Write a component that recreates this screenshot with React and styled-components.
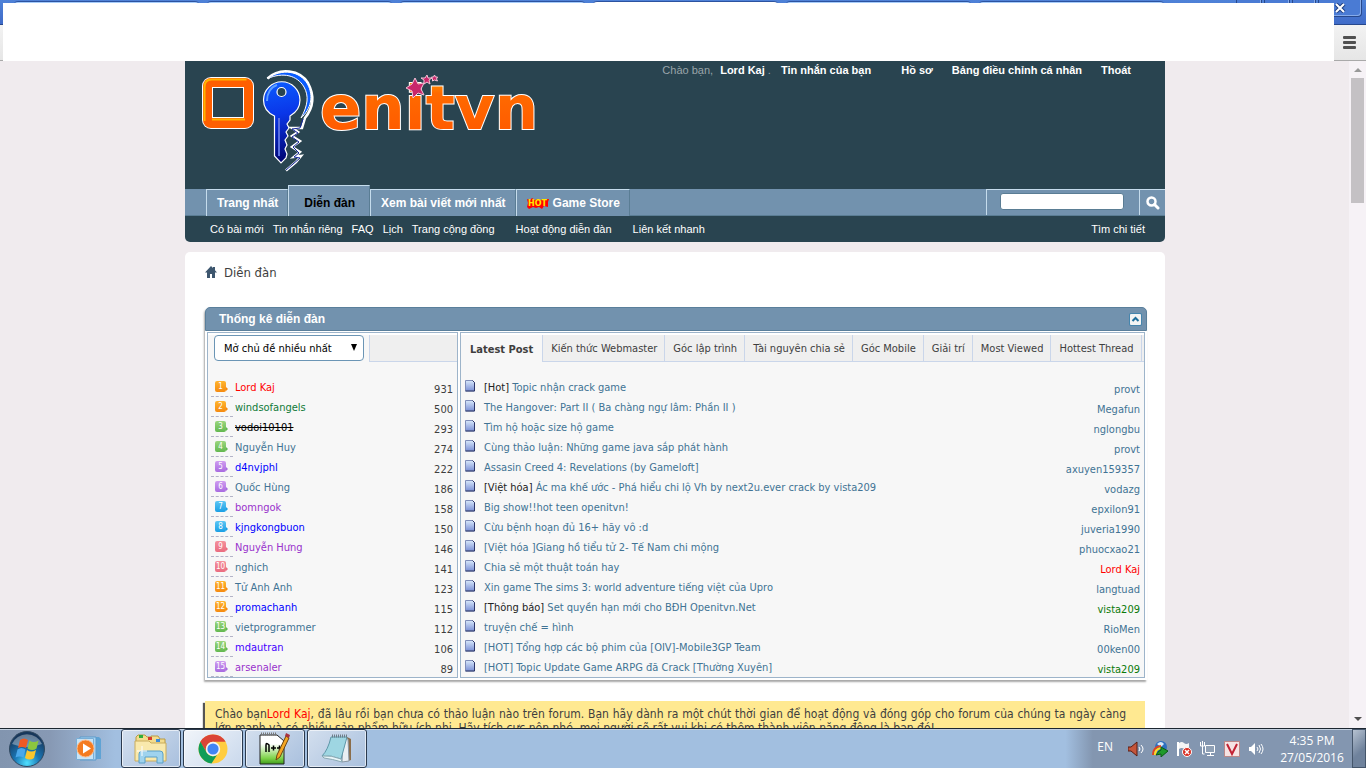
import React from 'react';
import styled, { createGlobalStyle } from 'styled-components';

const tahoma = "'DejaVu Sans Condensed', 'DejaVu Sans', sans-serif";
const arial = "'Liberation Sans', Arial, sans-serif";
const segoe = "'Open Sans', 'Noto Sans', sans-serif";

const GlobalStyle = createGlobalStyle`
  * {
    box-sizing: border-box;
  }
  body {
    margin: 0;
    background: #f0ebee;
  }
  a {
    color: inherit;
    text-decoration: none;
  }
  button, input, select {
    margin: 0;
    font: inherit;
    color: inherit;
  }
  table {
    border-collapse: collapse;
    width: 100%;
  }
  td {
    padding: 0;
  }
`;

const Screen = styled.div`
  display: flex;
  flex-direction: column;
  height: 100vh;
  overflow: hidden;
`;

/* browser window frame */

const Browser = styled.header`
  position: relative;
  flex: none;
  height: 61px;
  background: linear-gradient(#fbfbfb, #e6e6e6);
  border-bottom: 1px solid #a9a9a9;
`;

const TitleBar = styled.div`
  display: flex;
  justify-content: space-between;
  height: 25px;
  background: linear-gradient(#4f82d8, #3f6bc8);
  border-bottom: 1px solid #27488c;
`;

const BrowserTabs = styled.div`
  display: flex;
  gap: 8px;
  padding: 1px 0 0 14px;
`;

const BrowserTab = styled.span`
  width: 185px;
  height: 20px;
  border-top: 1px solid #2c53a0;
  border-radius: 4px 4px 0 0;
  background: ${(p) => (p.$active ? '#fff' : '#a6ccfb')};
`;

const CaptionButtons = styled.div`
  display: flex;
  gap: 2px;
  padding-right: 4px;
`;

const CaptionButton = styled.button`
  display: flex;
  align-items: center;
  justify-content: center;
  width: ${(p) => p.$width}px;
  height: 17px;
  padding: 0;
  border: 1px solid #27488c;
  border-top: 0;
  border-radius: 0 0 4px 4px;
  background: #4a7bd4;
  box-shadow: inset -1px -1px 0 #86abea;
`;

const MenuButton = styled.button`
  position: absolute;
  right: 10px;
  top: 36px;
  display: flex;
  flex-direction: column;
  gap: 2px;
  padding: 0;
  border: 0;
  background: none;

  span {
    width: 13px;
    height: 3px;
    border-radius: 1px;
    background: #505050;
  }
`;

const Cover = styled.div`
  position: absolute;
  top: 3px;
  right: 32px;
  bottom: -1px;
  left: 3px;
  background: #fff;
`;

/* scrolled page */

const Viewport = styled.div`
  display: flex;
  flex: 1;
  min-height: 0;
`;

const Page = styled.div`
  flex: 1;
  min-width: 0;
  overflow: hidden;
  padding-left: 1px;
`;

const Wrap = styled.div`
  max-width: 980px;
  margin: 0 auto;
`;

const ScrollBar = styled.div`
  display: flex;
  flex-direction: column;
  align-items: center;
  width: 17px;
  padding: 7px 0;
  background: #f6f2f6;
`;

const Thumb = styled.div`
  width: 13px;
  height: 125px;
  margin: 6px 0 auto;
  background: #c4c1c4;
`;

const Arrow = styled.span`
  border: 4px solid transparent;
  ${(p) => (p.$up ? 'border-bottom-color: #999; border-top: 0;' : 'border-top-color: #505050; border-bottom: 0;')}
`;

const Header = styled.div`
  background: #294450;
  border-radius: 0 0 5px 5px;
  font-family: ${arial};
  font-size: 11px;
  color: #fff;
`;

const HeaderTop = styled.div`
  display: flex;
  justify-content: space-between;
  align-items: flex-start;
  height: 128px;
  padding: 3px 34px 0 15px;
`;

const Logo = styled.a`
  margin-top: 2px;

  svg {
    display: block;
  }
`;

const UserLinks = styled.ul`
  display: flex;
  gap: 18px;
  margin: 0;
  padding: 0;
  list-style: none;
  font-weight: bold;
  line-height: 13px;

  li:nth-child(2) {
    margin-right: 12px;
  }
  li:nth-child(3), li:nth-child(4) {
    margin-right: 1px;
  }
`;

const Welcome = styled.li`
  margin-right: -8px;
  font-weight: normal;
  color: #9aa4aa;

  a {
    margin-left: 4px;
    font-weight: bold;
    color: #fff;
  }
`;

const NavBar = styled.nav`
  display: flex;
  height: 27px;
  padding-left: 21px;
  background: #7292ae;
  border-bottom: 1px solid #5a7d94;
  font-size: 12px;
  font-weight: bold;
`;

const NavTab = styled.a`
  display: flex;
  align-items: center;
  gap: 4px;
  height: ${(p) => (p.$active ? 31 : 27)}px;
  margin-top: ${(p) => (p.$active ? -4 : 0)}px;
  padding: ${(p) => (p.$active ? '4px 14px 0 15px' : '0 9px 0 10px')};
  background: #7292ae;
  border: solid #c5dcec;
  border-width: 1px 0 0 1px;
  border-right: 1px solid #5a7d94;
  color: ${(p) => (p.$active ? '#000' : '#fff')};
`;

const SearchForm = styled.form`
  display: flex;
  margin-left: auto;
`;

const SearchCell = styled.div`
  display: flex;
  align-items: center;
  padding: 0 15px 2px 13px;
  border: solid #c5dcec;
  border-width: 1px 0 0 1px;
`;

const SearchInput = styled.input`
  width: 124px;
  height: 17px;
  padding: 0 4px;
  border: 1px solid #5a7d94;
  border-radius: 3px;
  background: #fff;
  color: #333;
`;

const SearchButton = styled.button`
  width: 26px;
  padding: 0;
  border: solid #c5dcec;
  border-width: 1px 0 0 1px;
  background: none;

  svg {
    display: block;
    margin: 0 auto;
  }
`;

const SubNav = styled.nav`
  display: flex;
  height: 26px;
  padding: 1px 20px 0 25px;
  line-height: 25px;

  a {
    margin-right: 9px;
  }
  a:nth-child(5), a:nth-child(6) {
    margin-right: 21px;
  }
  a:last-child {
    margin: 0 0 0 auto;
  }
`;

const Content = styled.main`
  margin-top: 10px;
  padding: 10px 18px 20px 20px;
  background: #fff;
  border-radius: 5px 5px 0 0;
  font-family: ${tahoma};
  color: #3e3e3e;
`;

const Breadcrumb = styled.nav`
  display: flex;
  align-items: center;
  gap: 7px;
  height: 20px;
  margin-bottom: 25px;
  font-size: 13px;
`;

const Panel = styled.section`
  border-radius: 5px 5px 0 0;
  box-shadow: -1px 2px 2px rgba(0, 0, 0, 0.35);
`;

const PanelTitle = styled.div`
  display: flex;
  align-items: center;
  justify-content: space-between;
  height: 24px;
  padding: 0 5px 0 13px;
  background: #7292ae;
  border: 1px solid #5a7f9b;
  border-radius: 5px 5px 0 0;
  font-family: ${arial};
  color: #fff;

  h2 {
    margin: 0;
    font-size: 12px;
  }
`;

const Collapse = styled.button`
  width: 11px;
  height: 11px;
  padding: 0;
  border: 0;
  border-radius: 1px;
  background: #f4f4f4;
  box-shadow: 0 0 0 1px #4585ad;

  svg {
    display: block;
  }
`;

const PanelBody = styled.div`
  display: flex;
  gap: 2px;
  padding: 1px 2px 2px;
  background: #fff;
  font-size: 11px;
`;

const Box = styled.div`
  flex: ${(p) => (p.$side ? '0 0 251px' : 1)};
  min-width: 0;
  padding-top: 2px;
  border: 1px solid #9db4ca;
  background: #f7f7f7;
  box-shadow: inset 0 2px 0 #fff;
`;

const BoxHead = styled.div`
  display: flex;
  height: 27px;
  margin-bottom: 15px;
`;

const TopSelect = styled.select`
  width: 150px;
  height: 26px;
  margin: 0 5px 0 6px;
  padding: 0 9px;
  border: 1px solid #6b95b5;
  border-radius: 4px;
  background: #fff;
  color: #000;
  appearance: none;
`;

const SelectWrap = styled.label`
  position: relative;

  &::after {
    content: '';
    position: absolute;
    right: 12px;
    top: 9px;
    border: 3px solid transparent;
    border-top: 7px solid #000;
    border-bottom: 0;
  }
`;

const HeadFill = styled.div`
  flex: 1;
  background: #efefef;
  border: solid #cad6ea;
  border-width: 0 0 1px 1px;
`;

const Tab = styled.button`
  padding: 1px 7px 0 8px;
  border: solid #cad6ea;
  border-width: 0 0 1px 1px;
  background: #efefef;
  white-space: nowrap;

  ${(p) => p.$active && `
    padding: 1px 9px 0;
    border-width: 0;
    background: #f7f7f7;
    font-weight: bold;
  `}
`;

const Row = styled.tr`
  height: 20px;
`;

const RankCell = styled.td`
  width: 27px;
  padding-left: 3px;
`;

const RankSlot = styled.div`
  width: 22px;
  height: 20px;
  padding: 4px 0 0 4px;
  border-bottom: 1px dashed #b3b3c8;
`;

const rankColors = {
  orange: ['#ffb52e', '#f58a10'],
  green: ['#9bd67e', '#63b850'],
  purple: ['#cf9cf0', '#a86be0'],
  blue: ['#5cc6f4', '#1a9fe4'],
  pink: ['#f4929c', '#ea6c80'],
};

const Rank = styled.span`
  position: relative;
  display: block;
  width: 11px;
  height: 11px;
  border-radius: 2px;
  background: linear-gradient(${(p) => rankColors[p.$tone].join(', ')});
  font-size: 8px;
  line-height: 11px;
  text-align: center;
  color: #fff;

  &::after {
    content: '';
    position: absolute;
    left: 11px;
    bottom: 1px;
    border: 2px solid transparent;
    border-left-color: ${(p) => rankColors[p.$tone][1]};
    border-right: 0;
  }
`;

const Name = styled.a`
  color: ${(p) => p.$color || '#417394'};
  text-decoration: ${(p) => (p.$struck ? 'line-through' : 'none')};
`;

const Number = styled.td`
  padding: 4px 4px 0 0;
  text-align: right;
`;

const IconCell = styled.td`
  width: 23px;
  padding-left: 4px;

  svg {
    display: block;
    margin-top: -3px;
  }
`;

const Prefix = styled.span`
  color: #222;
`;

const Notice = styled.p`
  margin: 21px 2px 0 0;
  padding: 6px 19px 10px 10px;
  background: #ffe991;
  box-shadow: -2px 2px 1px #555;
  font-size: 12px;
  line-height: 14px;
  text-align: justify;
`;

/* taskbar */

const TaskBar = styled.footer`
  display: flex;
  flex: none;
  height: 40px;
  border-top: 1px solid #1c2630;
  background: linear-gradient(90deg, #8295af 0, #8799b4 50px, #a2bfe0 115px, #a2bfe0 78%, #8396b0 80%);
  box-shadow: inset 0 1px 0 #c3d0df;
  font-family: ${segoe};
  font-size: 12px;
  color: #fff;
`;

const StartButton = styled.button`
  margin-left: 8px;
  padding: 0;
  border: 0;
  background: none;

  svg {
    display: block;
  }
`;

const Pinned = styled.button`
  margin: 0 20px 0 30px;
  padding: 0;
  border: 0;
  background: none;

  svg {
    display: block;
  }
`;

const TaskButtons = styled.div`
  display: flex;
  gap: 2px;
`;

const TaskButton = styled.button`
  display: flex;
  align-items: center;
  justify-content: center;
  width: 60px;
  padding: 0;
  border: 1px solid #2b3a4e;
  border-radius: 3px;
  background: linear-gradient(135deg, ${(p) => (p.$active ? '#f1f5fa, #c9d8ec' : '#d3dfee, #a9c0de')});
  box-shadow: inset 0 0 0 1px rgba(255, 255, 255, 0.6);
`;

const Tray = styled.div`
  display: flex;
  align-items: center;
  margin-left: auto;
`;

const TrayGroup = styled.div`
  display: flex;
  align-items: center;
  gap: 8px;
  margin-right: 8px;
`;

const Lang = styled.span`
  margin: 0 7px 4px 0;
  line-height: 16px;
`;

const Clock = styled.time`
  width: 80px;
  line-height: 17px;
  text-align: center;
`;

const ShowDesktop = styled.button`
  width: 14px;
  height: 39px;
  padding: 0;
  border: 1px solid #45566b;
  background: linear-gradient(135deg, #b6c2d1, #6f829c 60%);
`;

const browserTabs = [0, 1, 2, 3, 4, 5];

const members = [
  ['Lord Kaj', 931, 'orange', '#ff0000'],
  ['windsofangels', 500, 'orange', '#107a38'],
  ['vodoi10101', 293, 'green', '#000000'],
  ['Nguyễn Huy', 274, 'green'],
  ['d4nvjphl', 222, 'purple', '#0000ff'],
  ['Quốc Hùng', 186, 'purple'],
  ['bomngok', 158, 'blue', '#9932cc'],
  ['kjngkongbuon', 150, 'blue', '#0000ff'],
  ['Nguyễn Hưng', 146, 'pink', '#9932cc'],
  ['nghich', 141, 'pink'],
  ['Tử Anh Anh', 123, 'orange'],
  ['promachanh', 115, 'orange', '#0000ff'],
  ['vietprogrammer', 112, 'green'],
  ['mdautran', 106, 'green', '#4400ff'],
  ['arsenaler', 89, 'purple', '#9932cc'],
];

const tabs = [
  'Latest Post',
  'Kiến thức Webmaster',
  'Góc lập trình',
  'Tài nguyên chia sẻ',
  'Góc Mobile',
  'Giải trí',
  'Most Viewed',
  'Hottest Thread',
];

const posts = [
  ['[Hot]', 'Topic nhận crack game', 'provt'],
  ['', 'The Hangover: Part II ( Ba chàng ngự lâm: Phần II )', 'Megafun'],
  ['', 'Tìm hộ hoặc size hộ game', 'nglongbu'],
  ['', 'Cùng thảo luận: Những game java sắp phát hành', 'provt'],
  ['', 'Assasin Creed 4: Revelations (by Gameloft]', 'axuyen159357'],
  ['[Việt hóa]', 'Ác ma khế ước - Phá hiểu chi lộ Vh by next2u.ever crack by vista209', 'vodazg'],
  ['', 'Big show!!hot teen openitvn!', 'epxilon91'],
  ['', 'Cừu bệnh hoạn đủ 16+ hãy vô :d', 'juveria1990'],
  ['', '[Việt hóa ]Giang hồ tiểu tử 2- Tế Nam chi mộng', 'phuocxao21'],
  ['', 'Chia sẻ một thuật toán hay', 'Lord Kaj', '#ff0000'],
  ['', 'Xin game The sims 3: world adventure tiếng việt của Upro', 'langtuad'],
  ['[Thông báo]', 'Set quyền hạn mới cho BĐH Openitvn.Net', 'vista209', '#0a7a0a'],
  ['', 'truyện chế = hình', 'RioMen'],
  ['', '[HOT] Tổng hợp các bộ phim của [OIV]-Mobile3GP Team', '00ken00'],
  ['', '[HOT] Topic Update Game ARPG đã Crack [Thường Xuyên]', 'vista209', '#0a7a0a'],
];

const LogoArt = () => (
  <svg width="340" height="108" viewBox="200 66 340 108" role="img" aria-label="Openitvn">
    <defs>
      <linearGradient id="orange" x1="0" y1="0" x2="0" y2="1">
        <stop offset="0" stopColor="#ffae00" />
        <stop offset="0.3" stopColor="#ff6a00" />
        <stop offset="0.8" stopColor="#ff5c00" />
        <stop offset="1" stopColor="#ff7a00" />
      </linearGradient>
      <linearGradient id="blue" gradientUnits="userSpaceOnUse" x1="275" y1="80" x2="290" y2="165">
        <stop offset="0" stopColor="#0c5cff" />
        <stop offset="0.4" stopColor="#0a36e8" />
        <stop offset="1" stopColor="#000066" />
      </linearGradient>
    </defs>
    <rect x="202" y="77" width="52" height="52" rx="9" fill="#fff" />
    <rect x="203" y="78" width="50" height="50" rx="8" fill="#ff5f00" />
    <path d="M204.500 121V87q0-7.500 7-7.500h35" fill="none" stroke="#ffb400" strokeWidth="2" />
    <path d="M212 119.500h33" stroke="#ffb400" strokeWidth="2" />
    <rect x="212" y="87" width="32" height="31" fill="#fff" />
    <rect x="213" y="88" width="30" height="29" fill="#294450" />
    <path
      d="M267.500 78.500C280 67 300 70 308 83C315 96 313 108 305 118L302 128L292 128L298 132L292 136L300 141L292 147L300 152L294 157L301 156L296 162L286 170.500"
      fill="none"
      stroke="#fff"
      strokeWidth="2.500"
    />
    <path
      d="M267.500 78.500C282 68 300 71 307.500 84C314 96 311 109 301 118C308 105 309 96 304 87C297 75 283 72 267.500 78.500Z"
      fill="#0a5cff"
      stroke="#fff"
      strokeWidth="1"
    />
    <path
      d="M303 119L300 128L292 129L298 133L292 137L299 142L293 147L299 153L294 157L300 158L286 170"
      fill="none"
      stroke="#14259a"
      strokeWidth="1"
    />
    <path
      fillRule="evenodd"
      d="M274.500 116C268 113 263.500 107 263.500 100A18.200 18.200 0 0 1 300 100C300 107 297 112 290 116V120L287 124L289 128L286 132L288 136L285 140L287 145L285 149L287 154L286 158L281 163L274.500 156ZM281.500 87.500A4.500 4.500 0 1 0 281.500 96.500A4.500 4.500 0 1 0 281.500 87.500Z"
      fill="url(#blue)"
      stroke="#fff"
      strokeWidth="1.200"
    />
    <path d="M267 101c0-8 4-14 10-16" fill="none" stroke="#5fa0ff" strokeWidth="2" />
    <path d="M279 118v38" stroke="#5a6fe0" strokeWidth="2" />
    <text
      x="320"
      y="129"
      fontFamily="'DejaVu Sans', sans-serif"
      fontSize="61"
      fontWeight="bold"
      fill="url(#orange)"
      stroke="#fff"
      strokeWidth="2"
      paintOrder="stroke"
    >
      enitvn
    </text>
    <g fill="#c9276b" stroke="#f4c4d8" strokeWidth="1">
      <path d="M415 78l3 6 6-1-3 6 3 6-6-2-5 5-1-7-6-3 6-4z" />
      <path d="M427 75l1 3 4 0-3 2 1 4-3-2-3 2 0-4-3-2 4 0z" />
      <path d="M434.500 75l1 2 2 0-1 2 1 2-3-1-2 1 0-2-1-2 2 0z" />
    </g>
  </svg>
);

const HotIcon = () => (
  <svg width="22" height="11" viewBox="0 0 22 11" aria-hidden="true">
    <path d="M0 1l3 1 2-2 3 2 3-1 3 1 3-1h5l-1 3v5l-4-1-2 3-3-2-3 1-3-1-4 2L0 9l1-4z" fill="#f00" />
    <text x="1" y="8" fontFamily="DejaVu Sans" fontSize="8" fontWeight="bold" fill="#ffe600">
      HOT
    </text>
  </svg>
);

const SearchIcon = () => (
  <svg width="14" height="14" viewBox="0 0 14 14" aria-hidden="true">
    <circle cx="5.500" cy="5.500" r="4" fill="none" stroke="#fff" strokeWidth="2.500" />
    <path d="M8.500 8.500l3.500 3.500" stroke="#fff" strokeWidth="3" strokeLinecap="round" />
  </svg>
);

const HomeIcon = () => (
  <svg width="12" height="12" viewBox="0 0 12 12" aria-hidden="true">
    <path d="M6 0L0 6.500h2V12h3V8h2v4h3V6.500h2L10 4.300V1H8v1z" fill="#3d566e" />
  </svg>
);

const DocIcon = () => (
  <svg width="11" height="12" viewBox="0 0 11 12" aria-hidden="true">
    <defs>
      <linearGradient id="doc" x1="0" y1="0" x2="0" y2="1">
        <stop offset="0" stopColor="#d8e8fb" />
        <stop offset="1" stopColor="#7b90d6" />
      </linearGradient>
    </defs>
    <path d="M0.500 0.500h7l2 2v8.500h-9z" fill="url(#doc)" stroke="#7f8db8" />
    <path d="M7.500 0.500l2 2v8.500h-9" fill="none" stroke="#2b3468" />
  </svg>
);

const StartIcon = () => (
  <svg width="38" height="38" viewBox="0 0 38 38" aria-hidden="true">
    <defs>
      <radialGradient id="orb" cx="0.5" cy="0.9" r="0.8">
        <stop offset="0" stopColor="#4fe0ff" />
        <stop offset="0.45" stopColor="#1a76b4" />
        <stop offset="1" stopColor="#17375c" />
      </radialGradient>
    </defs>
    <circle cx="19" cy="19" r="17.500" fill="url(#orb)" stroke="#30485f" />
    <path d="M4 14a16 15 0 0 1 30 0q-15 6-30 0z" fill="#fff" opacity="0.35" />
    <path d="M12 10q4-3 8 0l-2 8q-4-2-8 0z" fill="#ee5a24" />
    <path d="M21.500 10.500q4 3 9 0l-2 8q-4 3-9 0z" fill="#8cc63f" />
    <path d="M9.500 19.500q4-3 8 0l-2 8q-4-2-8 0z" fill="#4aa8ea" />
    <path d="M19 20q4 3 9 0l-2 8q-4 3-9 0z" fill="#fcc62d" />
  </svg>
);

const MediaIcon = () => (
  <svg width="25" height="25" viewBox="0 0 25 25" aria-hidden="true">
    <path d="M8 1h15l2 2v20H8z" fill="#5fa3d4" />
    <path d="M4 1h16v23H4z" fill="#a9d4f2" stroke="#5c9bcb" />
    <path d="M0.500 2.500h17v21h-17z" fill="#c7e3f6" stroke="#78aed6" />
    <circle cx="9.500" cy="12.500" r="8.500" fill="#f47b20" stroke="#fbb98a" />
    <path d="M7 7.500l8 5-8 5z" fill="#fff" />
  </svg>
);

const ExplorerIcon = () => (
  <svg width="34" height="30" viewBox="0 0 34 30" aria-hidden="true">
    <path d="M2 3l2-2h7l2 2h4V2h7l2 3h5v20H2z" fill="#f3dc8d" stroke="#b99a45" />
    <path d="M5 1h4v3H5z" fill="#2fae3c" />
    <path d="M14 3h4v3h-4z" fill="#d83a2c" />
    <path d="M22 5h4v3h-4z" fill="#3c8bd8" />
    <path d="M1 7h14l2 2h15v18H1z" fill="#f9e9ac" stroke="#c9ac5c" />
    <path d="M5 29V20q0-3 3-3h18q3 0 3 3v9h-6v-6H11v6z" fill="#9fd3ee" stroke="#5aa0c8" />
    <path d="M8 12v10M3 17h10" stroke="#fff" />
  </svg>
);

const ChromeIcon = () => (
  <svg width="30" height="30" viewBox="0 0 30 30" aria-hidden="true">
    <circle cx="15" cy="15" r="14.500" fill="#ffcd40" />
    <path d="M15 0.500A14.500 14.500 0 0 1 27.600 7.800H15A7.200 7.200 0 0 0 8.500 18L2.200 8A14.500 14.500 0 0 1 15 0.500z" fill="#db4437" />
    <path d="M2.400 7.800L8.800 18.800A7.200 7.200 0 0 0 19 21L13.500 29.400A14.500 14.500 0 0 1 2.400 7.800z" fill="#0f9d58" />
    <circle cx="15" cy="15" r="7.200" fill="#f4f4f4" />
    <circle cx="15" cy="15" r="5.600" fill="#4285f4" />
  </svg>
);

const NotepadPlusIcon = () => (
  <svg width="32" height="34" viewBox="0 0 32 34" aria-hidden="true">
    <defs>
      <linearGradient id="npp" x1="0" y1="0" x2="0" y2="1">
        <stop offset="0.3" stopColor="#fff" />
        <stop offset="0.8" stopColor="#7fd34a" />
        <stop offset="1" stopColor="#3f9c1c" />
      </linearGradient>
    </defs>
    <path d="M1 3h17l7 6v23H1z" fill="url(#npp)" stroke="#222" />
    <path d="M2 2h16" stroke="#777" strokeWidth="3" strokeDasharray="1 1" />
    <path d="M7 20v-7q0-3 3 0v7M12 16h5M14.500 13.500v5M18 16h5M20.500 13.500v5" fill="none" stroke="#000" strokeWidth="1.500" />
    <path d="M27 4l3 2-9 19-4 3 1-5z" fill="#f5a623" stroke="#6b4513" />
    <path d="M27 1l4 2-1 3-4-2z" fill="#a83240" />
  </svg>
);

const NotepadIcon = () => (
  <svg width="32" height="32" viewBox="0 0 32 32" aria-hidden="true">
    <path d="M26 4l4 2v21l-6 2z" fill="#8b6d4a" />
    <path d="M22 5l5 1 1 22-7 1z" fill="#e9eef2" stroke="#8b98a5" />
    <path d="M10 4h16l-6 22q-10-4-19-3q6-6 9-19z" fill="#9ed6e2" stroke="#5e97a8" />
    <path d="M1 23q9-1 19 3l1 3q-10-3-18-4z" fill="#e8f5f8" stroke="#8aa9b3" />
    <path d="M11 3h15" stroke="#6d7d88" strokeWidth="3" strokeDasharray="1 1" />
  </svg>
);

const Tray16 = ({ children }) => (
  <svg width="16" height="16" viewBox="0 0 16 16" fill="none" aria-hidden="true">
    {children}
  </svg>
);

const TrayIcons = () => (
  <>
    <Tray16>
      <path d="M0 6h3l6-5v14l-6-5H0z" fill="#c4553a" stroke="#5b1d12" />
      <path d="M11 6q2 2 0 4M13 4q4 4 0 8" stroke="#fff" />
    </Tray16>
    <Tray16>
      <circle cx="9" cy="6" r="6" fill="#2f6fc0" />
      <path d="M5 3q4-4 7 0l-3 3z" fill="#d7e9fa" />
      <path d="M1 14q0-8 8-9" stroke="#d42" strokeWidth="2" />
      <path d="M3 14q0-6 6-7" stroke="#fd2" strokeWidth="2" />
      <path d="M4 14q3-5 5-5V6l7 4-7 6v-3z" fill="#1e9a2a" stroke="#0b5a14" />
    </Tray16>
    <Tray16>
      <path d="M2 1v14" stroke="#fff" strokeWidth="2" />
      <path d="M3 2q3-2 5 0t5 0v6q-3 2-5 0t-5 0z" fill="#f5f5f5" />
      <circle cx="11" cy="11" r="4.500" fill="#d92c20" stroke="#fff" />
      <path d="M9 9l4 4M13 9l-4 4" stroke="#fff" strokeWidth="1.500" />
    </Tray16>
    <Tray16>
      <path d="M5.500 4.500h9v7h-9z" fill="#8fa0b5" stroke="#fff" />
      <path d="M7 14.500h7M10.500 12v2M0.500 1v4h4V1M2.500 0v13h2" stroke="#fff" />
    </Tray16>
    <Tray16>
      <rect x="0.500" y="0.500" width="15" height="15" fill="#f6e3e3" stroke="#b88" />
      <path d="M3 3l5 10 5-10" stroke="#c22234" strokeWidth="2" />
    </Tray16>
    <Tray16>
      <path d="M1 6h2l4-4v12L3 10H1z" fill="#fff" />
      <path d="M9 6q2 2 0 4M11 4q3 4 0 8M13 3q4 5 0 10" stroke="#fff" />
    </Tray16>
  </>
);

const BrowserFrame = () => (
  <Browser>
    <TitleBar>
      <BrowserTabs>
        {browserTabs.map((n) => (
          <BrowserTab key={n} $active={n === 3} />
        ))}
      </BrowserTabs>
      <CaptionButtons>
        <CaptionButton $width={26} aria-label="Profile" />
        <CaptionButton $width={26} aria-label="Minimize" />
        <CaptionButton $width={24} aria-label="Maximize" />
        <CaptionButton $width={44} aria-label="Close">
          <svg width="12" height="10" viewBox="0 0 12 10">
            <path d="M2 1l8 8M10 1L2 9" stroke="#1f3f80" strokeWidth="4" />
            <path d="M2 1l8 8M10 1L2 9" stroke="#fff" strokeWidth="2" />
          </svg>
        </CaptionButton>
      </CaptionButtons>
    </TitleBar>
    <MenuButton aria-label="Menu">
      <span />
      <span />
      <span />
    </MenuButton>
    <Cover />
  </Browser>
);

const ForumHeader = () => (
  <Header>
    <HeaderTop>
      <Logo href="#">
        <LogoArt />
      </Logo>
      <UserLinks>
        <Welcome>
          Chào bạn, <a href="#">Lord Kaj</a> .
        </Welcome>
        <li><a href="#">Tin nhắn của bạn</a></li>
        <li><a href="#">Hồ sơ</a></li>
        <li><a href="#">Bảng điều chỉnh cá nhân</a></li>
        <li><a href="#">Thoát</a></li>
      </UserLinks>
    </HeaderTop>
    <NavBar>
      <NavTab href="#">Trang nhất</NavTab>
      <NavTab href="#" $active>Diễn đàn</NavTab>
      <NavTab href="#">Xem bài viết mới nhất</NavTab>
      <NavTab href="#">
        <HotIcon />
        Game Store
      </NavTab>
      <SearchForm>
        <SearchCell>
          <SearchInput type="text" aria-label="Tìm kiếm" />
        </SearchCell>
        <SearchButton type="button" aria-label="Tìm">
          <SearchIcon />
        </SearchButton>
      </SearchForm>
    </NavBar>
    <SubNav>
      <a href="#">Có bài mới</a>
      <a href="#">Tin nhắn riêng</a>
      <a href="#">FAQ</a>
      <a href="#">Lịch</a>
      <a href="#">Trang cộng đồng</a>
      <a href="#">Hoạt động diễn đàn</a>
      <a href="#">Liên kết nhanh</a>
      <a href="#">Tìm chi tiết</a>
    </SubNav>
  </Header>
);

const Members = () => (
  <Box $side>
    <BoxHead>
      <SelectWrap>
        <TopSelect aria-label="Thống kê">
          <option>Mở chủ đề nhiều nhất</option>
        </TopSelect>
      </SelectWrap>
      <HeadFill />
    </BoxHead>
    <table>
      <tbody>
        {members.map(([name, count, tone, color], i) => (
          <Row key={name}>
            <RankCell>
              <RankSlot>
                <Rank $tone={tone}>{i + 1}</Rank>
              </RankSlot>
            </RankCell>
            <td>
              <Name href="#" $color={color} $struck={name === 'vodoi10101'}>{name}</Name>
            </td>
            <Number>{count}</Number>
          </Row>
        ))}
      </tbody>
    </table>
  </Box>
);

const Posts = () => (
  <Box>
    <BoxHead>
      {tabs.map((tab, i) => (
        <Tab key={tab} $active={i === 0}>{tab}</Tab>
      ))}
      <HeadFill />
    </BoxHead>
    <table>
      <tbody>
        {posts.map(([prefix, title, user, color]) => (
          <Row key={title}>
            <IconCell><DocIcon /></IconCell>
            <td>
              {prefix && <Prefix>{prefix} </Prefix>}
              <Name href="#">{title}</Name>
            </td>
            <Number>
              <Name href="#" $color={color}>{user}</Name>
            </Number>
          </Row>
        ))}
      </tbody>
    </table>
  </Box>
);

const App = () => (
  <Screen>
    <GlobalStyle />
    <BrowserFrame />
    <Viewport>
      <Page>
        <Wrap>
          <ForumHeader />
          <Content>
            <Breadcrumb>
              <HomeIcon />
              <a href="#">Diễn đàn</a>
            </Breadcrumb>
            <Panel>
              <PanelTitle>
                <h2>Thống kê diễn đàn</h2>
                <Collapse aria-label="Thu gọn">
                  <svg width="11" height="11" viewBox="0 0 11 11">
                    <path d="M2.500 7l3-3 3 3" fill="none" stroke="#1f6f9c" strokeWidth="2" />
                  </svg>
                </Collapse>
              </PanelTitle>
              <PanelBody>
                <Members />
                <Posts />
              </PanelBody>
            </Panel>
            <Notice>
              Chào bạn<Name href="#" $color="#ff0000">Lord Kaj</Name>, đã lâu rồi bạn chưa có thảo luận nào trên
              forum. Bạn hãy dành ra một chút thời gian để hoạt động và đóng góp cho forum của chúng ta ngày càng
              lớn mạnh và có nhiều sản phẩm hữu ích nhị. Hãy tích cực nên nhé, mọi người sẽ rất vui khi có thêm
              thành viên năng động là bạn đó!
            </Notice>
          </Content>
        </Wrap>
      </Page>
      <ScrollBar>
        <Arrow $up />
        <Thumb />
        <Arrow />
      </ScrollBar>
    </Viewport>
    <TaskBar>
      <StartButton aria-label="Start"><StartIcon /></StartButton>
      <Pinned aria-label="Media Player"><MediaIcon /></Pinned>
      <TaskButtons>
        <TaskButton aria-label="Explorer"><ExplorerIcon /></TaskButton>
        <TaskButton aria-label="Chrome" $active><ChromeIcon /></TaskButton>
        <TaskButton aria-label="Notepad++"><NotepadPlusIcon /></TaskButton>
        <TaskButton aria-label="Notepad"><NotepadIcon /></TaskButton>
      </TaskButtons>
      <Tray>
        <TrayGroup>
          <Lang>EN</Lang>
          <TrayIcons />
        </TrayGroup>
        <Clock>
          4:35 PM
          <br />
          27/05/2016
        </Clock>
        <ShowDesktop aria-label="Show desktop" />
      </Tray>
    </TaskBar>
  </Screen>
);

export default App;
